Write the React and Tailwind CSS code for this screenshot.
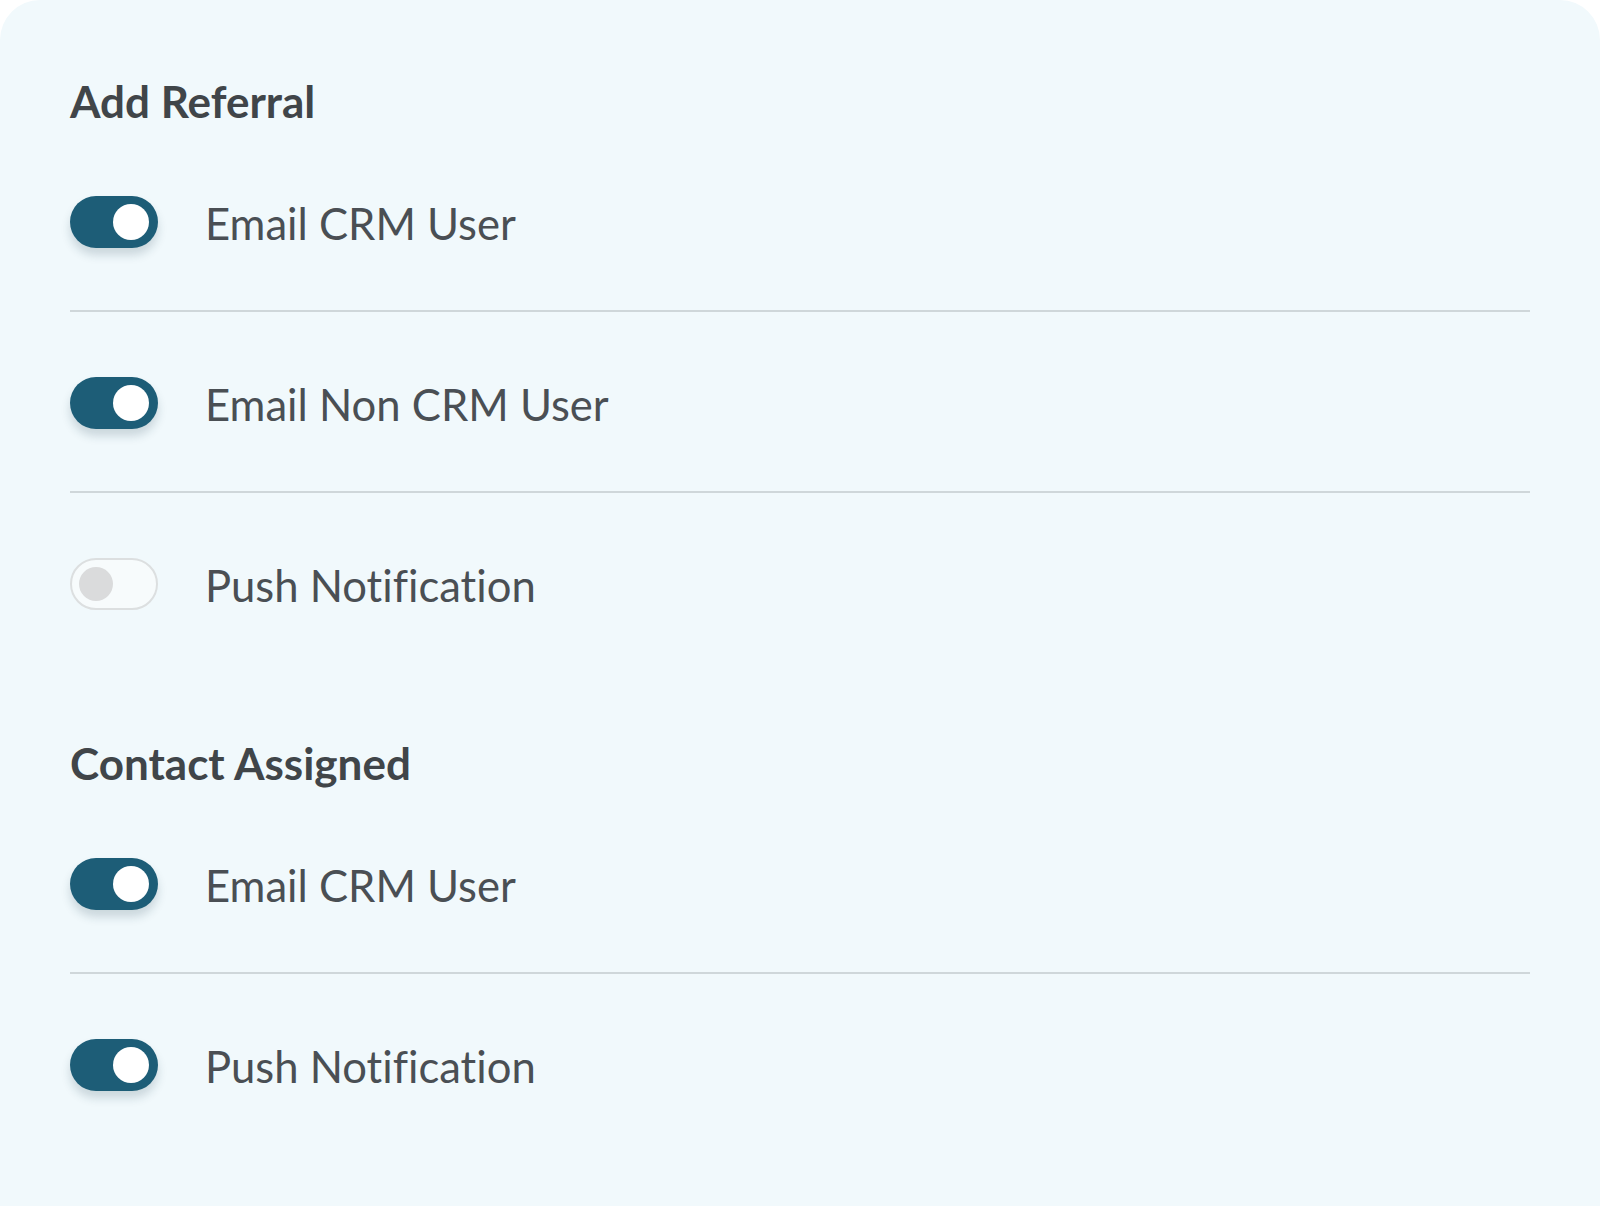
import React from "react";

const sections = [
  {
    title: "Add Referral",
    items: [
      { label: "Email CRM User", on: true },
      { label: "Email Non CRM User", on: true },
      { label: "Push Notification", on: false },
    ],
  },
  {
    title: "Contact Assigned",
    items: [
      { label: "Email CRM User", on: true },
      { label: "Push Notification", on: true },
    ],
  },
];

function Toggle({ on }) {
  if (on) {
    return (
      <div className="flex items-center justify-end w-[88px] h-[52px] rounded-full bg-[#1d5d77] pr-[9px] shadow-[0_7px_10px_rgba(30,60,80,0.18)] shrink-0">
        <div className="w-[36px] h-[36px] rounded-full bg-white" />
      </div>
    );
  }
  return (
    <div className="flex items-center w-[88px] h-[52px] rounded-full bg-[#f7fbfc] border-2 border-[#dcdfe0] pl-[7px] shrink-0">
      <div className="w-[34px] h-[34px] rounded-full bg-[#dadbdc]" />
    </div>
  );
}

export default function App() {
  return (
    <div
      className="min-h-screen bg-white [font-variant-ligatures:none]"
      style={{ fontFamily: "Lato, 'Open Sans', sans-serif" }}
    >
      <div className="min-h-screen bg-[#f1f9fc] rounded-t-[40px] px-[70px] pt-[75px] pb-[60px]">
        {sections.map((section, si) => (
          <section key={section.title} className={si > 0 ? "mt-[65px]" : ""}>
            <h2 className="text-[44px] leading-[53px] font-bold text-[#404549] mb-[3px]">
              {section.title}
            </h2>
            <div>
              {section.items.map((item, i) => (
                <div
                  key={item.label}
                  className={
                    "flex items-center gap-[47px] pt-[65px] pb-[62px] " +
                    (i < section.items.length - 1 ? "border-b-2 border-[#cfd7da]" : "")
                  }
                >
                  <Toggle on={item.on} />
                  <span className="text-[43.6px] leading-[50px] text-[#4a4f54] pt-[2px]">
                    {item.label}
                  </span>
                </div>
              ))}
            </div>
          </section>
        ))}
      </div>
    </div>
  );
}
